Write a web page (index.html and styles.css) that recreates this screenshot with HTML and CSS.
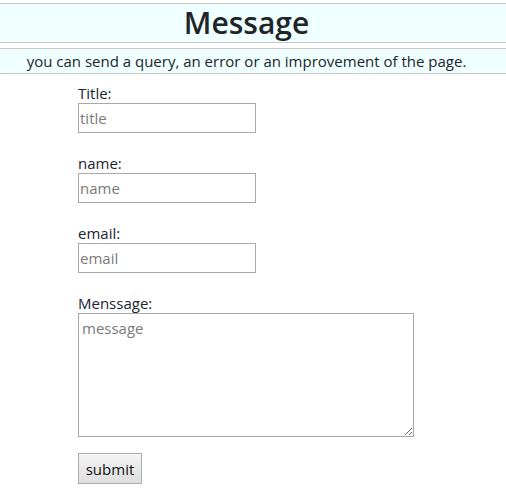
FILE: index.html
```html
<!DOCTYPE html>
<html lang="en">
<head>
<meta charset="utf-8">
<title>Message</title>
<link rel="stylesheet" href="styles.css">
</head>
<body>
<header class="banner">
  <h1 class="banner-title">Message</h1>
</header>
<p class="intro">you can send a query, an error or an improvement of the page.</p>
<form class="contact">
  <div class="field">
    <label class="label" for="title">Title:</label>
    <input class="input" id="title" type="text" placeholder="title">
  </div>
  <div class="field">
    <label class="label" for="name">name:</label>
    <input class="input" id="name" type="text" placeholder="name">
  </div>
  <div class="field">
    <label class="label" for="email">email:</label>
    <input class="input" id="email" type="text" placeholder="email">
  </div>
  <div class="field field-message">
    <label class="label" for="message">Menssage:</label>
    <textarea class="textarea" id="message" placeholder="message"></textarea>
  </div>
  <div class="actions">
    <button class="submit" type="button">submit</button>
  </div>
</form>
</body>
</html>
```

FILE: styles.css
```css
* { box-sizing: border-box; }
html, body { margin: 0; padding: 0; background: #fff; }
body {
  padding-top: 3px;
  font-family: "Open Sans", "Noto Sans", sans-serif;
  color: #212529;
}
.banner {
  background: #f0ffff;
  border-top: 1px solid #c8c8c8;
  border-bottom: 1px solid #c8c8c8;
  height: 40px;
  padding-right: 13px;
  display: flex;
  align-items: center;
  justify-content: center;
}
.banner-title {
  margin: 0;
  font-size: 30px;
  font-weight: 600;
  line-height: 38px;
}
.intro {
  margin: 5px 0 0;
  padding-right: 13px;
  background: #f0ffff;
  border-top: 1px solid #c8c8c8;
  border-bottom: 1px solid #c8c8c8;
  height: 26px;
  line-height: 24px;
  text-align: center;
  font-size: 15px;
}
.contact {
  display: flex;
  flex-direction: column;
  align-items: flex-start;
  padding: 9px 0 0 78px;
}
.field {
  display: flex;
  flex-direction: column;
  align-items: flex-start;
  margin-bottom: 20px;
}
.field-message { margin-bottom: 16px; }
.label {
  font-size: 15px;
  line-height: 20px;
  color: #1a2530;
}
.input, .textarea {
  font-family: inherit;
  font-size: 15px;
  border: 1px solid #a9a9a9;
  padding: 2px 1px;
  margin: 0;
  color: #333;
  background: #fff;
}
.input { width: 178px; height: 30px; }
.textarea {
  display: block;
  width: 336px;
  height: 124px;
  resize: both;
  line-height: 20px;
  padding-top: 4px;
  padding-left: 3px;
}
.input::placeholder, .textarea::placeholder { color: #7a7a7a; }
.actions { display: flex; }
.submit {
  font-family: inherit;
  font-size: 15px;
  width: 64px;
  height: 31px;
  padding: 0;
  border: 1px solid #adadad;
  border-radius: 0;
  background: linear-gradient(#f6f6f6, #dddddd);
  color: #111;
}
```
